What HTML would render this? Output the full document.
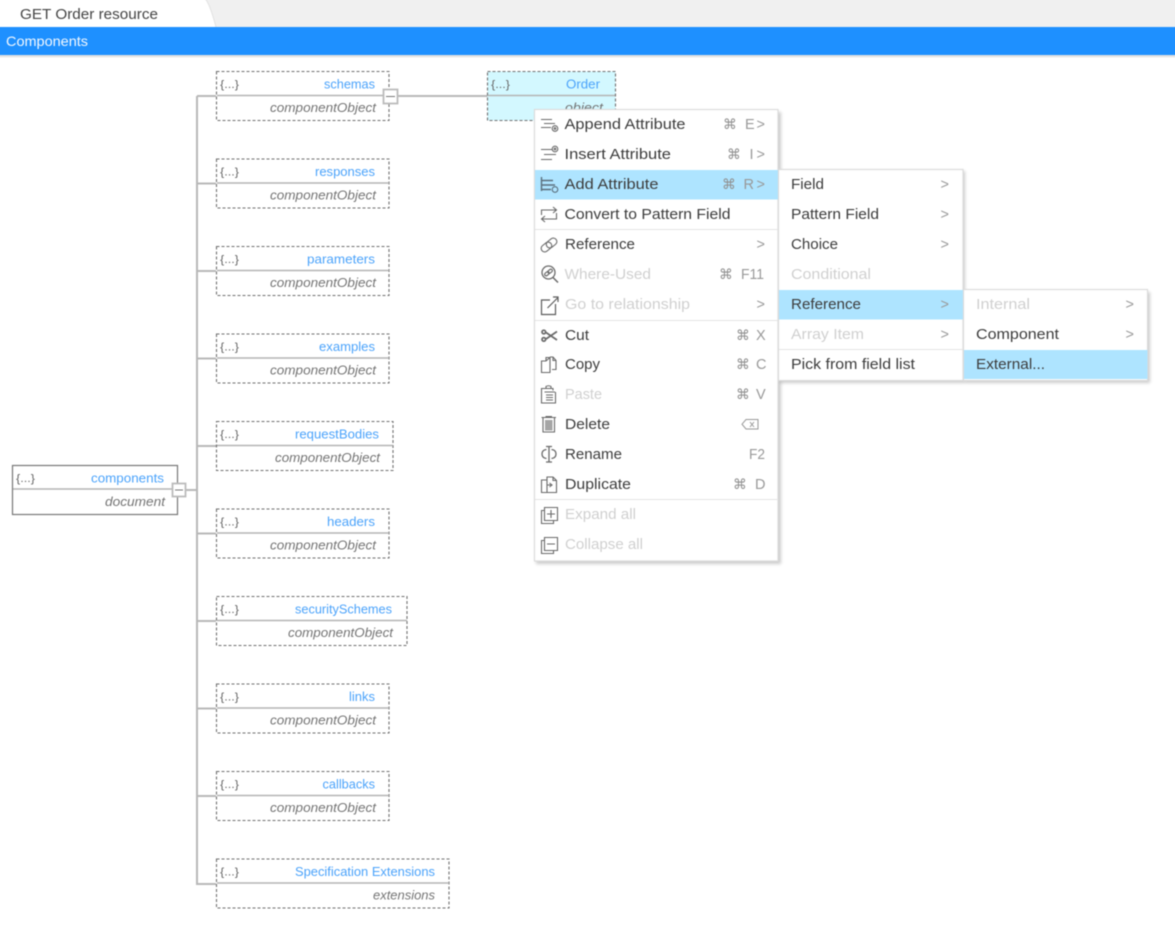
<!DOCTYPE html>
<html><head><meta charset="utf-8"><title>Components</title>
<style>
html,body{margin:0;padding:0;background:#fff;width:1175px;height:919px;overflow:hidden}
svg{display:block;position:absolute;left:-6px;top:-6px;filter:blur(0.42px)}
text{font-family:"Liberation Sans","DejaVu Sans",sans-serif;white-space:pre}
.m{font-size:15px;fill:#3c3c3c}
.d{font-size:15px;fill:#d0d0d0}
.s{font-size:14.5px;fill:#999}
.c{font-family:"DejaVu Sans",sans-serif;font-size:14px;fill:#909090}
.n{font-size:13px;fill:#4ba3fb}
.t{font-size:13px;fill:#747474;font-style:italic}
.b{font-size:11px;fill:#666}
.box{fill:#fff;stroke:#707070;stroke-width:1.100;stroke-dasharray:3 2}
.dv{stroke:#b4b4b4;stroke-width:1.500}
.i{fill:none;stroke:#6a6a6a;stroke-width:1.100}
.sep{stroke:#e4e4e4;stroke-width:1}
.menu{fill:#fff;stroke:#dcdcdc;stroke-width:1.200}
.sh{fill:#000;opacity:.2}
</style></head><body>
<svg width="1187" height="931" viewBox="-6 -6 1187 931" xmlns="http://www.w3.org/2000/svg">
<defs>
<filter id="bl" x="-10%" y="-10%" width="120%" height="120%"><feGaussianBlur stdDeviation="1.6"/></filter>
</defs>
<rect x="-6" y="-6" width="1187" height="931" fill="#fff"/>
<!-- top tab bar -->
<rect x="-6" y="-6" width="1187" height="33" fill="#f0f0f0"/>
<path d="M-6 -6H198C206 -6 211 8 216 27H-6Z" fill="#fff"/>
<path d="M198 -6C206 -6 211 8 216 27" fill="none" stroke="#e2e2e2"/>
<text x="20" y="19" font-size="14.500" fill="#444" textLength="138" lengthAdjust="spacingAndGlyphs">GET Order resource</text>
<rect x="-6" y="54" width="1187" height="3" fill="#999" opacity=".45" filter="url(#bl)"/>
<rect x="-6" y="27" width="1187" height="28" fill="#1e90ff"/>
<text x="6" y="46" font-size="14" fill="#f2f8ff" textLength="82" lengthAdjust="spacingAndGlyphs">Components</text>

<!-- connectors -->
<g stroke="#b8b8b8" stroke-width="2" fill="none">
<path d="M197 96V884H216"/>
<path d="M197 96H216M197 183.500H216M197 271H216M197 358.500H216M197 446H216M197 533.500H216M197 621H216M197 708.500H216M197 796H216"/>
<path d="M186 490H197"/>
<path d="M398 96H488"/>
</g>

<!-- root node -->
<rect x="12.500" y="465.500" width="165" height="49" fill="#fff" stroke="#777" stroke-width="1.200"/>
<line x1="13" x2="177" y1="489" y2="489" class="dv"/>
<text x="16" y="482" class="b" textLength="19" lengthAdjust="spacingAndGlyphs">{...}</text>
<text x="91" y="482.500" class="n" textLength="73" lengthAdjust="spacingAndGlyphs">components</text>
<text x="105" y="506" class="t" textLength="60" lengthAdjust="spacingAndGlyphs">document</text>
<rect x="172.500" y="483.500" width="13" height="13" fill="#fff" stroke="#bbb" stroke-width="1.800"/>
<line x1="175" x2="183" y1="490" y2="490" stroke="#777"/>

<!-- child nodes -->
<rect x="216.500" y="71.500" width="172.500" height="49" class="box"/>
<line x1="217" x2="389" y1="95.500" y2="95.500" class="dv"/>
<text x="220" y="88" class="b" textLength="19" lengthAdjust="spacingAndGlyphs">{...}</text>
<text x="324" y="88.500" class="n" textLength="51" lengthAdjust="spacingAndGlyphs">schemas</text>
<text x="270" y="112" class="t" textLength="106" lengthAdjust="spacingAndGlyphs">componentObject</text>
<rect x="383.500" y="89.500" width="14" height="14" fill="#fff" stroke="#bbb" stroke-width="1.800"/>
<line x1="386" x2="395" y1="96.500" y2="96.500" stroke="#777"/>

<rect x="216.500" y="159" width="172.500" height="49" class="box"/>
<line x1="217" x2="389" y1="183" y2="183" class="dv"/>
<text x="220" y="175.500" class="b" textLength="19" lengthAdjust="spacingAndGlyphs">{...}</text>
<text x="315" y="176" class="n" textLength="60" lengthAdjust="spacingAndGlyphs">responses</text>
<text x="270" y="199.500" class="t" textLength="106" lengthAdjust="spacingAndGlyphs">componentObject</text>

<rect x="216.500" y="246.500" width="172.500" height="49" class="box"/>
<line x1="217" x2="389" y1="270.500" y2="270.500" class="dv"/>
<text x="220" y="263" class="b" textLength="19" lengthAdjust="spacingAndGlyphs">{...}</text>
<text x="307" y="263.500" class="n" textLength="68" lengthAdjust="spacingAndGlyphs">parameters</text>
<text x="270" y="287" class="t" textLength="106" lengthAdjust="spacingAndGlyphs">componentObject</text>

<rect x="216.500" y="334" width="172.500" height="49" class="box"/>
<line x1="217" x2="389" y1="358" y2="358" class="dv"/>
<text x="220" y="350.500" class="b" textLength="19" lengthAdjust="spacingAndGlyphs">{...}</text>
<text x="319" y="351" class="n" textLength="56" lengthAdjust="spacingAndGlyphs">examples</text>
<text x="270" y="374.500" class="t" textLength="106" lengthAdjust="spacingAndGlyphs">componentObject</text>

<rect x="216.500" y="421.500" width="176.500" height="49" class="box"/>
<line x1="217" x2="393" y1="445.500" y2="445.500" class="dv"/>
<text x="220" y="438" class="b" textLength="19" lengthAdjust="spacingAndGlyphs">{...}</text>
<text x="295" y="438.500" class="n" textLength="84" lengthAdjust="spacingAndGlyphs">requestBodies</text>
<text x="275" y="462" class="t" textLength="105" lengthAdjust="spacingAndGlyphs">componentObject</text>

<rect x="216.500" y="509" width="172.500" height="49" class="box"/>
<line x1="217" x2="389" y1="533" y2="533" class="dv"/>
<text x="220" y="525.500" class="b" textLength="19" lengthAdjust="spacingAndGlyphs">{...}</text>
<text x="327" y="526" class="n" textLength="48" lengthAdjust="spacingAndGlyphs">headers</text>
<text x="270" y="549.500" class="t" textLength="106" lengthAdjust="spacingAndGlyphs">componentObject</text>

<rect x="216.500" y="596.500" width="190.500" height="49" class="box"/>
<line x1="217" x2="407" y1="620.500" y2="620.500" class="dv"/>
<text x="220" y="613" class="b" textLength="19" lengthAdjust="spacingAndGlyphs">{...}</text>
<text x="295" y="613.500" class="n" textLength="97" lengthAdjust="spacingAndGlyphs">securitySchemes</text>
<text x="288" y="637" class="t" textLength="105" lengthAdjust="spacingAndGlyphs">componentObject</text>

<rect x="216.500" y="684" width="172.500" height="49" class="box"/>
<line x1="217" x2="389" y1="708" y2="708" class="dv"/>
<text x="220" y="700.500" class="b" textLength="19" lengthAdjust="spacingAndGlyphs">{...}</text>
<text x="349" y="701" class="n" textLength="26" lengthAdjust="spacingAndGlyphs">links</text>
<text x="270" y="724.500" class="t" textLength="106" lengthAdjust="spacingAndGlyphs">componentObject</text>

<rect x="216.500" y="771.500" width="172.500" height="49" class="box"/>
<line x1="217" x2="389" y1="795.500" y2="795.500" class="dv"/>
<text x="220" y="788" class="b" textLength="19" lengthAdjust="spacingAndGlyphs">{...}</text>
<text x="322.500" y="788.500" class="n" textLength="52.500" lengthAdjust="spacingAndGlyphs">callbacks</text>
<text x="270" y="812" class="t" textLength="106" lengthAdjust="spacingAndGlyphs">componentObject</text>

<rect x="216.500" y="859" width="232.500" height="49" class="box"/>
<line x1="217" x2="449" y1="883" y2="883" class="dv"/>
<text x="220" y="875.500" class="b" textLength="19" lengthAdjust="spacingAndGlyphs">{...}</text>
<text x="295" y="876" class="n" textLength="140" lengthAdjust="spacingAndGlyphs">Specification Extensions</text>
<text x="373" y="899.500" class="t" textLength="62" lengthAdjust="spacingAndGlyphs">extensions</text>

<!-- selected Order node -->
<rect x="487.500" y="71.500" width="128" height="49" fill="#d3f8ff" stroke="#707070" stroke-width="1.100" stroke-dasharray="3 2"/>
<line x1="488" x2="615" y1="95.500" y2="95.500" class="dv"/>
<text x="491" y="88" class="b" textLength="19" lengthAdjust="spacingAndGlyphs">{...}</text>
<text x="566" y="88.500" class="n" textLength="34" lengthAdjust="spacingAndGlyphs">Order</text>
<text x="565" y="112" class="t" textLength="38" lengthAdjust="spacingAndGlyphs">object</text>

<!-- shadows -->
<rect x="536" y="112" width="245" height="452" class="sh" filter="url(#bl)"/>
<rect x="780" y="171" width="185" height="212" class="sh" filter="url(#bl)"/>
<rect x="965" y="292" width="185" height="91" class="sh" filter="url(#bl)"/>

<!-- menu 1 -->
<rect x="534.500" y="109.500" width="243.500" height="451.500" class="menu"/>
<rect x="535" y="170" width="243" height="29.500" fill="#aee4ff"/>
<line x1="535" x2="778" y1="229.500" y2="229.500" class="sep"/>
<line x1="535" x2="778" y1="320.500" y2="320.500" class="sep"/>
<line x1="535" x2="778" y1="499.500" y2="499.500" class="sep"/>

<text x="564.500" y="129" class="m" textLength="121" lengthAdjust="spacingAndGlyphs">Append Attribute</text>
<text x="564.500" y="159" class="m" textLength="106.500" lengthAdjust="spacingAndGlyphs">Insert Attribute</text>
<text x="564.500" y="189" class="m" textLength="94" lengthAdjust="spacingAndGlyphs">Add Attribute</text>
<text x="564.500" y="219" class="m" textLength="166" lengthAdjust="spacingAndGlyphs">Convert to Pattern Field</text>
<text x="565" y="249" class="m" textLength="70" lengthAdjust="spacingAndGlyphs">Reference</text>
<text x="564.500" y="279" class="d" textLength="86.500" lengthAdjust="spacingAndGlyphs">Where-Used</text>
<text x="565" y="309" class="d" textLength="125" lengthAdjust="spacingAndGlyphs">Go to relationship</text>
<text x="565" y="340" class="m" textLength="24" lengthAdjust="spacingAndGlyphs">Cut</text>
<text x="565" y="369" class="m" textLength="35" lengthAdjust="spacingAndGlyphs">Copy</text>
<text x="565" y="399" class="d" textLength="37" lengthAdjust="spacingAndGlyphs">Paste</text>
<text x="565" y="429" class="m" textLength="45" lengthAdjust="spacingAndGlyphs">Delete</text>
<text x="565" y="459" class="m" textLength="57" lengthAdjust="spacingAndGlyphs">Rename</text>
<text x="565" y="489" class="m" textLength="66" lengthAdjust="spacingAndGlyphs">Duplicate</text>
<text x="565" y="519" class="d" textLength="71" lengthAdjust="spacingAndGlyphs">Expand all</text>
<text x="565" y="549" class="d" textLength="78" lengthAdjust="spacingAndGlyphs">Collapse all</text>

<!-- shortcuts -->
<text x="723" y="129" class="c">⌘</text><text x="745" y="129" class="s">E</text><text x="756.500" y="129" class="s">&gt;</text>
<text x="727" y="159" class="c">⌘</text><text x="749.500" y="159" class="s">I</text><text x="756.500" y="159" class="s">&gt;</text>
<text x="722" y="189" class="c">⌘</text><text x="743.500" y="189" class="s">R</text><text x="756.500" y="189" class="s">&gt;</text>
<text x="756.500" y="249" class="s">&gt;</text>
<text x="719" y="279" class="c">⌘</text><text x="741" y="279" class="s" textLength="23" lengthAdjust="spacingAndGlyphs">F11</text>
<text x="756.500" y="309" class="s">&gt;</text>
<text x="736" y="340" class="c">⌘</text><text x="756" y="340" class="s">X</text>
<text x="736" y="369" class="c">⌘</text><text x="756" y="369" class="s">C</text>
<text x="736" y="399" class="c">⌘</text><text x="756" y="399" class="s">V</text>
<path d="M746 419.500H758V429H746L742 424.200Z M750 422L754 427M754 422L750 427" fill="none" stroke="#999"/>
<text x="749" y="459" class="s" textLength="16" lengthAdjust="spacingAndGlyphs">F2</text>
<text x="733" y="489" class="c">⌘</text><text x="755" y="489" class="s">D</text>

<!-- icons -->
<g class="i">
<path d="M541 119.500H552M544 123.500H555M541 127.500H551"/><circle cx="555" cy="128.500" r="2.800"/><circle cx="555" cy="128.500" r=".8"/>
<path d="M541 159.500H552M544 154.500H556M541 149.500H552"/><circle cx="555" cy="149" r="2.800"/><circle cx="555" cy="149" r=".8"/>
<path d="M541.500 177V191M541.500 180.500H553M541.500 185H555M541.500 189.500H551" stroke="#5b6f7d" stroke-width="1.400"/><circle cx="555" cy="189.500" r="2.800" stroke="#5b6f7d"/>
<path d="M541.500 215V210H556M553 207L556.500 210L553 213M556.500 213V219H542M545 216L541.500 219L545 222"/>
<g transform="rotate(-38 549 245)"><rect x="540" y="241.500" width="11.500" height="7" rx="3.500"/><rect x="546.500" y="241.500" width="11.500" height="7" rx="3.500"/></g>
<circle cx="548.500" cy="272.500" r="6.500" stroke-width="1.300"/><path d="M553 277.500L558 282.500" stroke-width="1.500"/><g transform="rotate(-38 548.500 272.500)" stroke-width="1.200"><rect x="544" y="271" width="5" height="3" rx="1.500"/><rect x="548" y="271" width="5" height="3" rx="1.500"/></g>
<path d="M555.500 304V314.500H541.500V300H550M547.500 308L557.500 298M553 297H558V302" stroke="#5c5c5c" stroke-width="1.200"/>
<g stroke-width="1.700"><path d="M546 332.500L557 340M546 339L557 331.500"/><circle cx="543.800" cy="332" r="1.800"/><circle cx="543.800" cy="339.400" r="1.800"/></g>
<path d="M541.500 361H546L550 357.500V372.500H541.500ZM546 361V357.500H550M550 357H553L556 360.500V369.500H552M553 357V360.500H556"/>
<path d="M544 388.500H553V390.500M544 388.500H541.500V403H555.500V392M546 388V386.500Q548.500 385 551 386.500V388M544.500 392H555M546 395H553M546 397.500H553M546 400H553"/>
<path d="M541.500 417.500H556M543 417.500V432H554.500V417.500M545.500 416.500H552"/><rect x="545" y="420" width="7.500" height="10.500" fill="#a5a5a5" stroke="none"/>
<path d="M549 446.500V462M546 446.500H552M546 462H552M546.500 449.500Q542 450 542 454T546.500 458.500M551.500 449.500Q556 450 556 454T551.500 458.500" stroke-width="1.300"/>
<path d="M541.500 480H547V492.500H541.500ZM547 477H553L556.500 480.500V492.500H547ZM553 477V480.500H556.500M547 485H551M549.500 483L552 485L549.500 487"/>
<path d="M544.500 507.500H557.500V520.500H544.500ZM547 514H555M551 510V518M544.500 510.500H541.500V523.500H553.500V520.500"/>
<path d="M544.500 537.500H557.500V550.500H544.500ZM547 544H555M544.500 540.500H541.500V553.500H553.500V550.500"/>
</g>

<!-- menu 2 -->
<rect x="778.500" y="169.500" width="184.500" height="211" class="menu"/>
<rect x="779" y="290" width="184" height="29.500" fill="#aee4ff"/>
<line x1="779" x2="963" y1="349.500" y2="349.500" class="sep"/>
<text x="791" y="189" class="m" textLength="33" lengthAdjust="spacingAndGlyphs">Field</text>
<text x="791" y="219" class="m" textLength="88" lengthAdjust="spacingAndGlyphs">Pattern Field</text>
<text x="791" y="249" class="m" textLength="47" lengthAdjust="spacingAndGlyphs">Choice</text>
<text x="791" y="279" class="d" textLength="80" lengthAdjust="spacingAndGlyphs">Conditional</text>
<text x="791" y="309" class="m" textLength="70" lengthAdjust="spacingAndGlyphs">Reference</text>
<text x="791" y="339" class="d" textLength="73" lengthAdjust="spacingAndGlyphs">Array Item</text>
<text x="791" y="369" class="m" textLength="124" lengthAdjust="spacingAndGlyphs">Pick from field list</text>
<text x="940.500" y="189" class="s">&gt;</text>
<text x="940.500" y="219" class="s">&gt;</text>
<text x="940.500" y="249" class="s">&gt;</text>
<text x="940.500" y="309" class="s">&gt;</text>
<text x="940.500" y="339" class="s">&gt;</text>

<!-- menu 3 -->
<rect x="963.500" y="289.500" width="184" height="91" class="menu"/>
<rect x="964" y="350" width="183.500" height="29" fill="#aee4ff"/>
<text x="976" y="309" class="d" textLength="54" lengthAdjust="spacingAndGlyphs">Internal</text>
<text x="976" y="339" class="m" textLength="83" lengthAdjust="spacingAndGlyphs">Component</text>
<text x="976" y="369" class="m" textLength="69" lengthAdjust="spacingAndGlyphs">External...</text>
<text x="1125.500" y="309" class="s">&gt;</text>
<text x="1125.500" y="339" class="s">&gt;</text>
</svg>
</body></html>
